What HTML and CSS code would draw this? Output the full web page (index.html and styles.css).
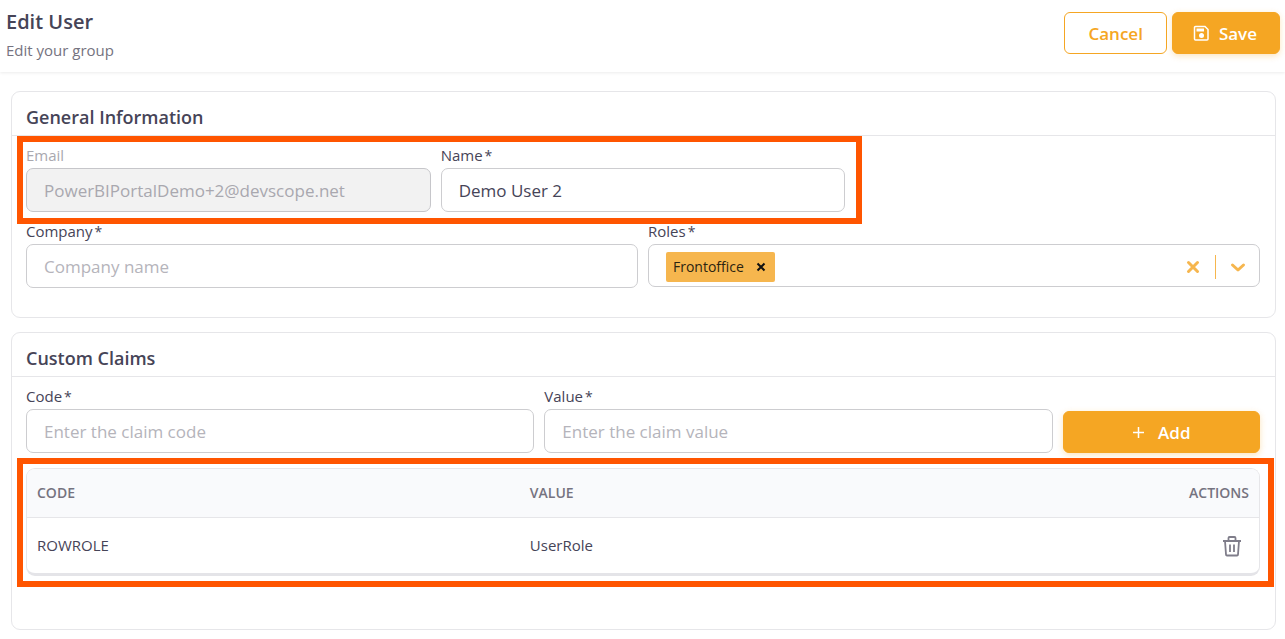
FILE: index.html
```html
<!DOCTYPE html>
<html lang="en">
<head>
    <meta charset="UTF-8">
    <meta name="viewport" content="width=device-width, initial-scale=1">
    <title>Edit User</title>
    <link rel="stylesheet" href="styles.css">
</head>
<body>
    <header class="topbar">
        <div class="topbar__title">
            <h1>Edit User</h1>
            <p>Edit your group</p>
        </div>
        <div class="topbar__actions">
            <button type="button" class="btn btn--outline">Cancel</button>
            <button type="submit" form="userForm" class="btn btn--save">
                <svg width="17" height="17" viewBox="0 0 17 17" fill="none" stroke="currentColor" aria-hidden="true">
                    <path d="M2.5 1.5h9.5l3 3v9.500a1 1 0 0 1-1 1H2.500a1 1 0 0 1-1-1V2.500a1 1 0 0 1 1-1z" stroke-width="1.500"/>
                    <path d="M3.500 5h7.500" stroke-width="3"/>
                    <circle cx="8.500" cy="10.500" r="2.500" fill="currentColor" stroke="none"/>
                </svg>
                <span>Save</span>
            </button>
        </div>
    </header>
    <main>
        <form id="userForm">
            <section class="card">
                <h2>General Information</h2>
                <div class="card__body grid">
                    <div class="pair highlight highlight--fields">
                        <div class="field field--disabled">
                            <label for="email">Email</label>
                            <input type="email" id="email" value="PowerBIPortalDemo+2@devscope.net" disabled>
                        </div>
                        <div class="field">
                            <label for="name">Name<span class="req">*</span></label>
                            <input type="text" id="name" value="Demo User 2">
                        </div>
                    </div>
                    <div class="field half">
                        <label for="company">Company<span class="req">*</span></label>
                        <input type="text" id="company" placeholder="Company name">
                    </div>
                    <div class="field half">
                        <label for="roles">Roles<span class="req">*</span></label>
                        <div class="multi">
                            <span class="tag">Frontoffice
                                <button type="button" aria-label="Remove Frontoffice">
                                    <svg width="10" height="10" viewBox="0 0 10 10" fill="none" stroke="currentColor" stroke-width="2"><path d="M1.500 1.500l7 7M8.500 1.500l-7 7"/></svg>
                                </button>
                            </span>
                            <input type="text" id="roles" role="combobox" aria-expanded="false">
                            <button type="button" class="multi__btn" aria-label="Clear roles">
                                <svg width="14" height="14" viewBox="0 0 14 14" fill="none" stroke="currentColor" stroke-width="3" stroke-linecap="round"><path d="M2.500 2.500l9 9M11.500 2.500l-9 9"/></svg>
                            </button>
                            <span class="multi__sep"></span>
                            <button type="button" class="multi__btn" aria-label="Open roles">
                                <svg width="16" height="14" viewBox="0 0 16 14" fill="none" stroke="currentColor" stroke-width="3" stroke-linecap="round" stroke-linejoin="round"><path d="M2.500 5L8 10l5.500-5"/></svg>
                            </button>
                        </div>
                    </div>
                </div>
            </section>

            <section class="card card--claims">
                <h2>Custom Claims</h2>
                <div class="card__body">
                    <div class="grid">
                        <div class="field claim">
                            <label for="code">Code<span class="req">*</span></label>
                            <input type="text" id="code" placeholder="Enter the claim code">
                        </div>
                        <div class="field claim">
                            <label for="value">Value<span class="req">*</span></label>
                            <input type="text" id="value" placeholder="Enter the claim value">
                        </div>
                        <button type="button" class="btn btn--add">
                            <svg width="13" height="13" viewBox="0 0 13 13" fill="none" stroke="currentColor" stroke-width="1.500" aria-hidden="true"><path d="M6.500 1v11M1 6.500h11"/></svg>
                            <span>Add</span>
                        </button>
                    </div>
                    <div class="highlight highlight--table">
                        <div class="table-wrap">
                            <table>
                                <thead>
                                    <tr><th>CODE</th><th>VALUE</th><th class="right">ACTIONS</th></tr>
                                </thead>
                                <tbody>
                                    <tr>
                                        <td>ROWROLE</td>
                                        <td>UserRole</td>
                                        <td class="right">
                                            <button type="button" class="trash" aria-label="Delete claim">
                                                <svg width="20" height="22" viewBox="0 0 20 22" fill="none" stroke="currentColor" stroke-width="1.800" stroke-linejoin="round">
                                                    <path d="M1 6h18M6.500 6V3a1 1 0 0 1 1-1h5a1 1 0 0 1 1 1v3M3 6l1 13.500a1 1 0 0 0 1 1h10a1 1 0 0 0 1-1L17 6M8 9.500v7.500M12 9.500v7.500"/>
                                                </svg>
                                            </button>
                                        </td>
                                    </tr>
                                </tbody>
                            </table>
                        </div>
                    </div>
                </div>
            </section>
        </form>
    </main>
</body>
</html>
```
FILE: styles.css
```css
:root {--text: #464457;--muted: #757380;--line: #e6e6e9;--field: #cdcdd0;--orange: #f5a623;--orange-soft: #f6b64e;--mark: #ff5500;}
* {box-sizing: border-box;}
body {margin: 0;background: #fff;color: var(--text);font-family: "Segoe UI", "Open Sans", "Noto Sans", sans-serif;font-size: 15px;}
button, input {font-family: inherit;}
button {cursor: pointer;}
h1, h2, p {margin: 0;}

.topbar {display: flex;justify-content: space-between;align-items: flex-start;height: 72px;padding: 8px 5px 0 6px;box-shadow: 0 1px 3px rgba(0,0,0,.08);}
.topbar h1 {font-size: 20px;line-height: 28px;font-weight: 600;}
.topbar p {line-height: 28px;color: var(--muted);}
.topbar__actions {display: flex;gap: 5px;padding-top: 4px;}

.btn {display: flex;align-items: center;justify-content: center;height: 42px;padding: 0 23px;border: 1px solid var(--orange);border-radius: 6px;background: var(--orange);color: #fff;font-size: 17px;font-weight: 600;box-shadow: 0 2px 6px rgba(245,166,35,.3);}
.btn--outline {background: #fff;color: var(--orange);box-shadow: none;}
.btn--save {gap: 9px;padding: 0 22px 0 20px;}
.btn--add {grid-column: span 2;align-self: end;gap: 13px;}

main {padding: 19px 9px 9px 11px;}
.card {margin-bottom: 14px;border: 1px solid var(--line);border-radius: 9px;}
.card h2 {height: 44px;padding: 0 14px;border-bottom: 1px solid var(--line);font-size: 18px;line-height: 50px;font-weight: 600;}
.card__body {padding: 8px 15px 29px 14px;}
.card--claims {margin-bottom: 0;}
.card--claims .card__body {padding-bottom: 53px;}
.grid {display: grid;grid-template-columns: repeat(12, 1fr);gap: 8px 10px;}
.pair {grid-column: span 8;display: grid;grid-template-columns: 1fr 1fr;gap: 10px;}
.half {grid-column: span 6;}
.claim {grid-column: span 5;}

.field label {display: block;height: 24px;line-height: 22px;}
.req {margin-left: 2px;font-size: 14px;}
.field > input {display: block;width: 100%;height: 44px;padding: 0 17px;border: 1px solid var(--field);border-radius: 7px;background: #fff;color: var(--text);font-size: 17px;}
.field input::placeholder {color: #b5b4bb;opacity: 1;}
.field--disabled label {color: #a9a8af;}
.field--disabled > input {background: #f2f2f2;color: #a9a8af;border-color: #c6c6ca;}

.multi {display: flex;align-items: center;height: 43px;padding: 2px 13px 0 17px;border: 1px solid var(--field);border-radius: 7px;}
.multi input {flex: 1;min-width: 0;border: 0;outline: 0;background: none;}
.multi__btn {display: flex;padding: 0;border: 0;background: none;color: var(--orange-soft);}
.multi__sep {width: 1px;height: 24px;margin: 0 14px 0 15px;background: var(--orange-soft);}
.tag {display: flex;align-items: center;gap: 12px;height: 30px;padding: 0 9px 0 7px;border-radius: 2px;background: var(--orange-soft);color: #2b2411;font-size: 14px;}
.tag button {display: flex;padding: 0;border: 0;background: none;color: #111;}

/* call-out frame around a group */
.highlight {position: relative;}
.highlight::after {content: "";position: absolute;border: 6px solid var(--mark);pointer-events: none;}
.highlight--fields::after {inset: -8px -17px -12px -9px;}
.highlight--table {margin-top: 15px;}
.highlight--table::after {inset: -10px -14px -11px -9px;}

.table-wrap {overflow: hidden;border: 1px solid var(--line);border-bottom: 3px solid #e4e4e8;border-radius: 9px;}
table {width: 100%;table-layout: fixed;border-collapse: collapse;}
th, td {padding: 0 10px;text-align: left;}
th {height: 48px;background: #f9fafc;border-bottom: 1px solid var(--line);color: var(--muted);font-size: 14px;font-weight: 600;}
td {height: 56px;}
th:nth-child(-n+2) {width: 40%;}
th.right, td.right {text-align: right;}
.trash {display: inline-flex;margin-right: 7px;padding: 0;border: 0;background: none;color: #7f7d8a;vertical-align: middle;}
```
